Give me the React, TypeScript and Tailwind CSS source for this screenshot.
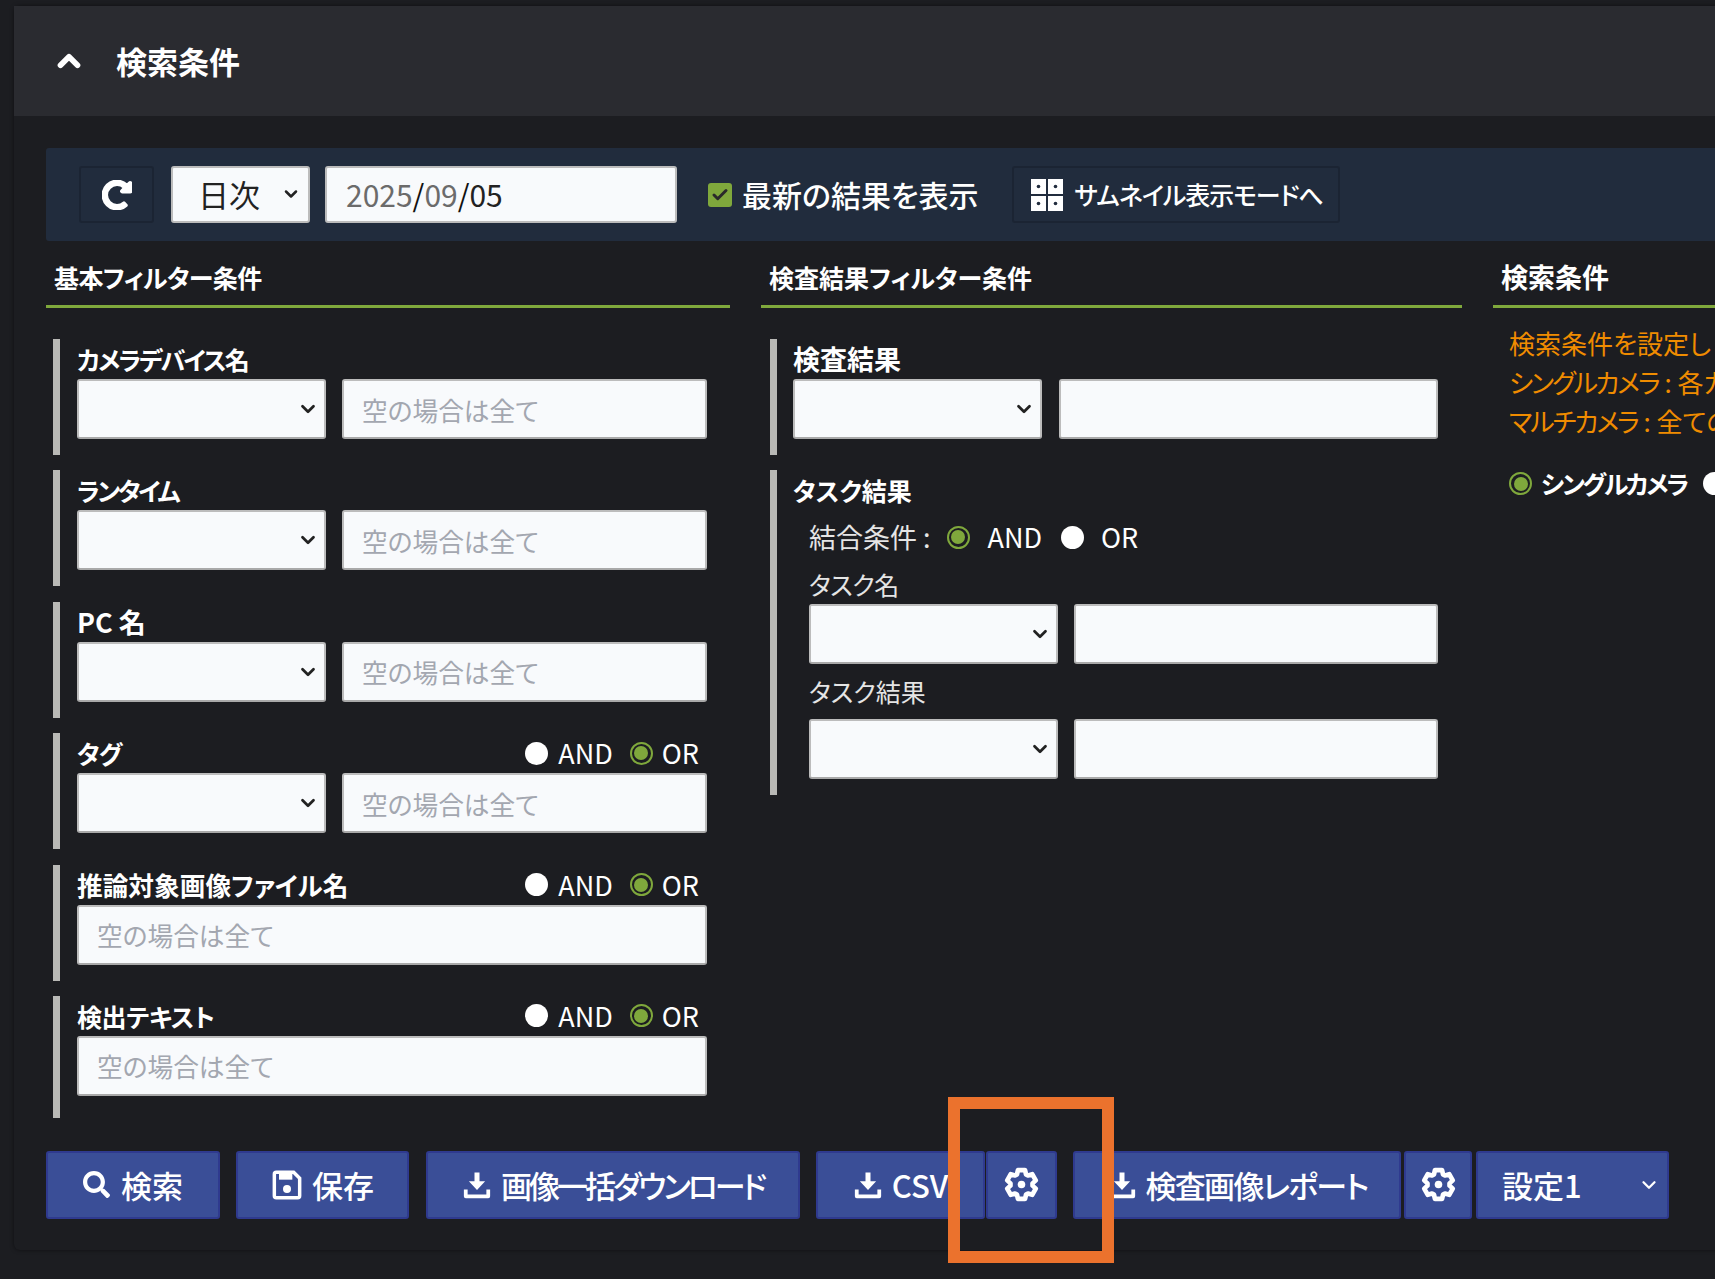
import { Check, ChevronDown, ChevronUp } from "lucide-react";
import { FaRedoAlt, FaSearch } from "react-icons/fa";

const font = "font-['Noto_Sans_CJK_JP','Noto_Sans',sans-serif] [font-feature-settings:'palt']";

// six tooth gear outline, as in the reference buttons
const gearPoints = Array.from({ length: 6 }, (_, i) => {
  const a = (i * 60 - 90) * (Math.PI / 180);
  return [
    [a - 0.42, 7.6],
    [a - 0.24, 10.2],
    [a + 0.24, 10.2],
    [a + 0.42, 7.6],
  ]
    .map(([t, r]) => `${(12 + r * Math.cos(t)).toFixed(2)},${(12 + r * Math.sin(t)).toFixed(2)}`)
    .join(" ");
}).join(" ");

function GearIcon() {
  return (
    <svg width="35" height="35" viewBox="0 0 24 24" fill="none">
      <polygon points={gearPoints} stroke="currentColor" strokeWidth="3.2" strokeLinejoin="round" />
      <circle cx="12" cy="12" r="2.6" fill="currentColor" />
    </svg>
  );
}

function DownloadIcon() {
  return (
    <svg width="30" height="30" viewBox="0 0 24 24" fill="none">
      <path d="M10 2h4v7h4.5L12 16 5.500 9H10z" fill="currentColor" />
      <path d="M3 15.500V21h18v-5.500" stroke="currentColor" strokeWidth="3" strokeLinejoin="round" />
    </svg>
  );
}

function SaveIcon() {
  return (
    <svg width="32" height="32" viewBox="0 0 24 24" fill="none">
      <path d="M4 2.500h13L21.500 7v13a1.500 1.500 0 0 1-1.500 1.500H4A1.500 1.500 0 0 1 2.500 20V4A1.500 1.500 0 0 1 4 2.500z" stroke="currentColor" strokeWidth="2.6" />
      <rect x="6" y="3" width="10" height="5" fill="currentColor" />
      <circle cx="12" cy="15" r="3" fill="currentColor" />
    </svg>
  );
}

function ThumbIcon() {
  return (
    <svg width="34" height="34" viewBox="0 0 34 34">
      <rect x="1" y="1" width="15" height="15" fill="white" />
      <rect x="18" y="1" width="15" height="15" fill="white" />
      <rect x="1" y="18" width="15" height="15" fill="white" />
      <rect x="18" y="18" width="15" height="15" fill="white" />
      <circle cx="8.500" cy="8.500" r="1.800" fill="#212c3d" />
      <circle cx="25.500" cy="8.500" r="1.800" fill="#212c3d" />
      <circle cx="8.500" cy="25.500" r="1.800" fill="#212c3d" />
      <circle cx="25.500" cy="25.500" r="1.800" fill="#212c3d" />
    </svg>
  );
}

function Radio({ on }: { on?: boolean }) {
  return on ? (
    <span className="flex h-[23px] w-[23px] shrink-0 items-center justify-center rounded-full border-2 border-[#7fa83c]">
      <span className="h-[14px] w-[14px] rounded-full bg-[#7fa83c]" />
    </span>
  ) : (
    <span className="block h-[23px] w-[23px] shrink-0 rounded-full bg-white" />
  );
}

function AndOr() {
  return (
    <div className="flex items-center text-[27px] font-normal">
      <Radio />
      <span className="ml-[10px]">AND</span>
      <span className="ml-[17px]"><Radio on /></span>
      <span className="ml-[9px] mr-[8px]">OR</span>
    </div>
  );
}

function Select() {
  return (
    <div className="relative h-[60px] rounded-[3px] border-2 border-[#bcbcbc] border-b-[#a9a9a9] bg-[#f8fafc]">
      <ChevronDown size={22} strokeWidth={3} className="absolute right-[5px] top-[17px] text-[#222]" />
    </div>
  );
}

function TextBox({ placeholder }: { placeholder?: string }) {
  return (
    <input
      placeholder={placeholder}
      className="h-[60px] w-full rounded-[3px] border-2 border-[#bcbcbc] border-b-[#a9a9a9] bg-[#f8fafc] px-[18px] text-[25.7px] font-normal placeholder:text-[#a3a7b0]"
    />
  );
}

function Field({ label, labelClass = "text-[25px]", full, andOr, h = "h-[116px]" }: { label: string; labelClass?: string; full?: boolean; andOr?: boolean; h?: string }) {
  return (
    <div className={`flex ${h}`}>
      <div className="w-[7px] bg-[#b9b9b6]" />
      <div className="ml-[17px] flex-1">
        <div className="flex h-[40px] items-end justify-between pb-[2px] font-bold leading-[36px]">
          <span className={labelClass}>{label}</span>
          {andOr && <AndOr />}
        </div>
        {full ? (
          <TextBox placeholder="空の場合は全て" />
        ) : (
          <div className="grid grid-cols-[249px_1fr] gap-[16px]">
            <Select />
            <TextBox placeholder="空の場合は全て" />
          </div>
        )}
      </div>
    </div>
  );
}

function SectionTitle({ children, textClass = "text-[25px]" }: { children: string; textClass?: string }) {
  return (
    <div className={`flex h-[67px] items-end border-b-[3px] border-[#7fa83c] pb-[8px] pl-[8px] font-bold leading-[40px] ${textClass}`}>
      {children}
    </div>
  );
}

function ActionButton({ children, className = "" }: { children: React.ReactNode; className?: string }) {
  return (
    <div className={`flex h-[68px] shrink-0 items-center justify-center gap-[9px] rounded-[3px] border-2 border-[#2f3a8f] bg-[#3a4e97] text-[31px] font-medium whitespace-nowrap text-white ${className}`}>
      {children}
    </div>
  );
}

export default function App() {
  return (
    <div className={`relative h-[1279px] w-[1715px] overflow-hidden bg-[#1c1d21] pl-[14px] pt-[6px] text-white ${font}`}>
      <div className="h-[1244px] w-[1780px] rounded-[6px] bg-[#1c1d21] shadow-[0_0_4px_rgba(0,0,0,0.5)]">
        <div className="flex h-[110px] items-center bg-[#2a2b30] pl-[38px] text-[31px] font-bold">
          <ChevronUp size={34} strokeWidth={4} />
          <span className="ml-[30px]">検索条件</span>
        </div>

        <div className="px-[32px] pt-[32px]">
          <div className="flex h-[93px] items-center rounded-[3px] bg-[#212c3d] pl-[33px]">
            <div className="flex h-[57px] w-[75px] items-center justify-center rounded-[3px] border-2 border-[#1b2433]">
              <FaRedoAlt size={30} stroke="currentColor" strokeWidth={30} />
            </div>
            <div className="relative ml-[17px] flex h-[57px] w-[139px] items-center rounded-[3px] border-2 border-[#bcbcbc] bg-[#f8fafc] pl-[25px] text-[31px] text-[#222]">
              日次
              <ChevronDown size={20} strokeWidth={3} className="absolute right-[7px] top-[16px]" />
            </div>
            <div className="ml-[15px] flex h-[57px] w-[352px] items-center rounded-[3px] border-2 border-[#bcbcbc] bg-[#f8fafc] pl-[19px] text-[30px] text-[#6b6b6b]">
              2025<span className="text-[#111]">/</span>09<span className="text-[#111]">/</span><span className="text-[#222]">05</span>
            </div>
            <div className="ml-[31px] flex h-[24px] w-[24px] shrink-0 items-center justify-center rounded-[3px] bg-[#7fa83c] text-[#2a2a2a]">
              <Check size={18} strokeWidth={4} />
            </div>
            <span className="ml-[10px] text-[30px] font-medium whitespace-nowrap">最新の結果を表示</span>
            <div className="ml-[33px] flex h-[57px] w-[328px] items-center justify-center gap-[10px] rounded-[3px] border-2 border-[#1b2433] pl-[2px] text-[25px] font-medium tracking-[-1px] whitespace-nowrap">
              <ThumbIcon />
              サムネイル表示モードへ
            </div>
          </div>

          <div className="flex gap-[31px]">
            <div className="w-[684px] shrink-0">
              <SectionTitle textClass="text-[25px] tracking-[-0.6px]">基本フィルター条件</SectionTitle>
              <div className="mt-[31px] flex flex-col gap-[15.4px] pl-[7px] pr-[23px]">
                <Field label="カメラデバイス名" labelClass="text-[25px] tracking-[-2px]" />
                <Field label="ランタイム" labelClass="text-[25px] tracking-[-2.4px]" />
                <Field label="PC 名" labelClass="text-[27px]" />
                <Field label="タグ" labelClass="text-[25px] tracking-[-1px]" andOr />
                <Field label="推論対象画像ファイル名" labelClass="text-[25.7px]" full andOr />
                <Field label="検出テキスト" labelClass="text-[25px] tracking-[-0.4px]" full andOr h="h-[122px]" />
              </div>
            </div>

            <div className="w-[701px] shrink-0">
              <SectionTitle>検査結果フィルター条件</SectionTitle>
              <div className="mt-[31px] flex flex-col gap-[15.4px] pl-[9px] pr-[24px]">
                <div className="flex h-[116px]">
                  <div className="w-[7px] bg-[#b9b9b6]" />
                  <div className="ml-[16px] flex-1">
                    <div className="flex h-[40px] items-end pb-[2px] text-[27px] font-bold leading-[36px]">検査結果</div>
                    <div className="grid grid-cols-[249px_1fr] gap-[17px]">
                      <Select />
                      <TextBox />
                    </div>
                  </div>
                </div>
                <div className="flex h-[325px]">
                  <div className="w-[7px] bg-[#b9b9b6]" />
                  <div className="ml-[16px] flex-1">
                    <div className="flex h-[40px] items-end pb-[2px] text-[25px] font-bold leading-[36px]">タスク結果</div>
                    <div className="pl-[16px]">
                      <div className="mt-[9px] flex h-[36px] items-center text-[27px]">
                        <span className="text-[#e5e5e5]">結合条件 :</span>
                        <span className="ml-[16px]"><Radio on /></span>
                        <span className="ml-[18px]">AND</span>
                        <span className="ml-[19px]"><Radio /></span>
                        <span className="ml-[17px]">OR</span>
                      </div>
                      <div className="mt-[11px] h-[38px] text-[25px] leading-[36px] tracking-[-0.5px] text-[#e5e5e5]">タスク名</div>
                      <div className="grid grid-cols-[249px_1fr] gap-[16px]">
                        <Select />
                        <TextBox />
                      </div>
                      <div className="mt-[7px] h-[48px] text-[25px] leading-[40px] text-[#e5e5e5]">タスク結果</div>
                      <div className="grid grid-cols-[249px_1fr] gap-[16px]">
                        <Select />
                        <TextBox />
                      </div>
                    </div>
                  </div>
                </div>
              </div>
            </div>

            <div className="w-[300px] shrink-0">
              <SectionTitle textClass="text-[27px]">検索条件</SectionTitle>
              <div className="ml-[16px] mt-[15px] whitespace-nowrap text-[26px] leading-[39px] text-[#f08c00]">
                <div>検索条件を設定し</div>
                <div><span className="tracking-[-2px]">シングルカメラ</span> : 各カ</div>
                <div><span className="tracking-[-2px]">マルチカメラ</span> : 全ての</div>
              </div>
              <div className="ml-[16px] mt-[25px] flex items-center whitespace-nowrap text-[25px] font-bold">
                <Radio on />
                <span className="ml-[9px] tracking-[-2.2px]">シングルカメラ</span>
                <span className="ml-[16px]"><Radio /></span>
              </div>
            </div>
          </div>

          <div className="mt-[33px] flex">
            <ActionButton className="w-[174px] gap-[11px]"><FaSearch size={27} />検索</ActionButton>
            <ActionButton className="ml-[16px] w-[173px]"><SaveIcon />保存</ActionButton>
            <ActionButton className="ml-[17px] w-[374px] tracking-[-3px]"><DownloadIcon />画像一括ダウンロード</ActionButton>
            <ActionButton className="ml-[16px] w-[169px]"><DownloadIcon />CSV</ActionButton>
            <ActionButton className="ml-[1px] w-[71px]"><GearIcon /></ActionButton>
            <ActionButton className="ml-[16px] w-[328px] tracking-[-1.7px]"><DownloadIcon />検査画像レポート</ActionButton>
            <ActionButton className="ml-[3px] w-[68px]"><GearIcon /></ActionButton>
            <ActionButton className="relative ml-[4px] w-[193px] !justify-start pl-[24px] text-[30px]">
              設定1
              <ChevronDown size={22} strokeWidth={2.5} className="absolute right-[7px] top-[21px]" />
            </ActionButton>
          </div>
        </div>
      </div>

      {/* orange callout drawn over the screenshot */}
      <div className="absolute left-[948px] top-[1097px] h-[166px] w-[166px] border-[12px] border-[#eb722d]" />
    </div>
  );
}
